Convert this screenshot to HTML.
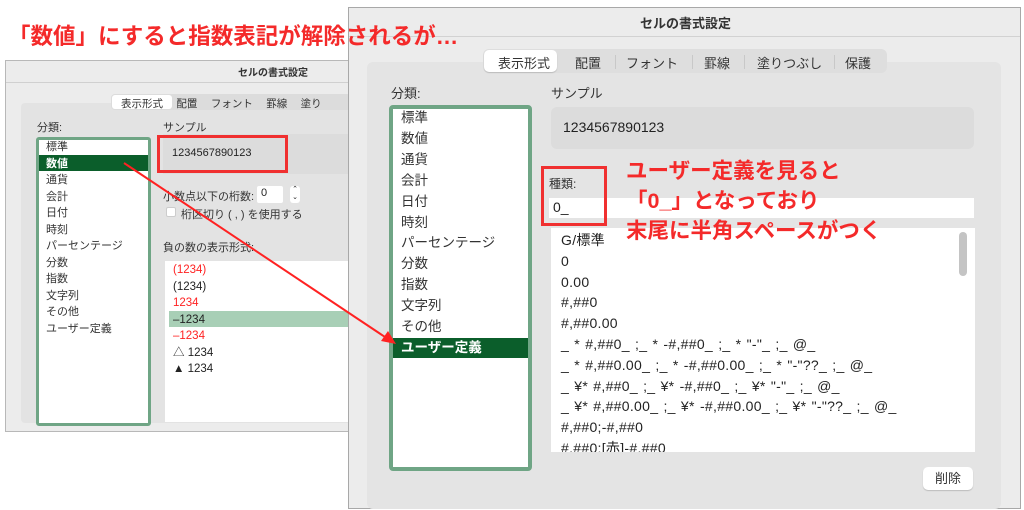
<!DOCTYPE html>
<html><head><meta charset="utf-8"><style>
*{margin:0;padding:0;box-sizing:border-box}
body{width:1024px;height:510px;background:#fff;position:relative;overflow:hidden;font-family:"Liberation Sans","Noto Sans CJK JP",sans-serif;color:#222}
.a{position:absolute;white-space:nowrap}
.red{color:#f42a2a;font-weight:bold}
</style></head><body>

<!-- left dialog -->
<div class="a" style="left:5px;top:60px;width:350px;height:372px;background:#ececec;border:1px solid #b8b8b8"></div>
<div class="a" style="left:6px;top:82px;width:344px;height:1px;background:#d0d0d0"></div>
<div class="a" style="left:238px;top:64px;font-size:10px;font-weight:bold;color:#333">セルの書式設定</div>
<div class="a" style="left:21px;top:103px;width:330px;height:320px;background:#e3e3e3;border-radius:4px"></div>
<div class="a" style="left:111px;top:94px;width:240px;height:16px;background:#dcdcdc;border-radius:4px"></div>
<div class="a" style="left:112px;top:95px;width:60px;height:14px;background:#fff;border-radius:3px"></div>
<div class="a" style="left:121px;top:96px;font-size:10.5px;color:#333">表示形式　 配置　 フォント　 罫線　 塗り</div>
<div class="a" style="left:37px;top:119px;font-size:11px;color:#333">分類:</div>
<div class="a" style="left:163px;top:119px;font-size:11px;color:#333">サンプル</div>
<div class="a" style="left:36px;top:137px;width:115px;height:289px;background:#fff;border:3px solid #6fa585;border-radius:3px"></div>
<div class="a" style="left:39px;top:155px;width:109px;height:16px;background:#0b5e2b"></div>
<div class="a" style="left:46px;top:139px;font-size:11px;line-height:16.5px;color:#333">標準<br><span style="color:#fff;font-weight:bold">数値</span><br>通貨<br>会計<br>日付<br>時刻<br>パーセンテージ<br>分数<br>指数<br>文字列<br>その他<br>ユーザー定義</div>
<div class="a" style="left:163px;top:134px;width:186px;height:40px;background:#dcdcdc"></div>
<div class="a" style="left:157px;top:135px;width:131px;height:38px;border:3px solid #f03030"></div>
<div class="a" style="left:172px;top:147px;font-size:11px;color:#222">1234567890123</div>
<div class="a" style="left:163px;top:188px;font-size:11px;color:#333">小数点以下の桁数:</div>
<div class="a" style="left:257px;top:186px;width:26px;height:17px;background:#fff;border-radius:2px;font-size:11px;padding:1px 4px">0</div>
<div class="a" style="left:290px;top:186px;width:10px;height:17px;background:#fff;border-radius:3px;font-size:7px;line-height:8px;text-align:center">⌃<br>⌄</div>
<div class="a" style="left:166px;top:207px;width:10px;height:10px;background:#fff;border-radius:2px;border:1px solid #ccc"></div>
<div class="a" style="left:181px;top:206px;font-size:11px;color:#333">桁区切り ( , ) を使用する</div>
<div class="a" style="left:163px;top:239px;font-size:11px;color:#333">負の数の表示形式:</div>
<div class="a" style="left:165px;top:261px;width:185px;height:161px;background:#fff"></div>
<div class="a" style="left:169px;top:311px;width:181px;height:16px;background:#a8cfb6"></div>
<div class="a" style="left:173px;top:262px;font-size:11.5px;line-height:16.5px"><span style="color:#f22">(1234)</span><br>(1234)<br><span style="color:#f22">1234</span><br>–1234<br><span style="color:#f22">–1234</span><br>△ 1234<br>▲ 1234</div>

<!-- right dialog -->
<div class="a" style="left:348px;top:7px;width:673px;height:502px;background:#ececec;border:1px solid #a8a8a8"></div>
<div class="a" style="left:349px;top:36px;width:671px;height:1px;background:#d2d2d2"></div>
<div class="a" style="left:640px;top:13px;font-size:13px;font-weight:bold;color:#333">セルの書式設定</div>
<div class="a" style="left:367px;top:62px;width:634px;height:447px;background:#e4e4e4;border-radius:6px"></div>
<div class="a" style="left:483px;top:49px;width:404px;height:24px;background:#dedede;border-radius:6px"></div>
<div class="a" style="left:484px;top:50px;width:73px;height:22px;background:#fff;border-radius:5px;box-shadow:0 1px 1px #bbb"></div>
<div class="a" style="left:498px;top:53px;font-size:13px;color:#333">表示形式</div>
<div class="a" style="left:575px;top:53px;font-size:13px;color:#333">配置</div>
<div class="a" style="left:626px;top:53px;font-size:13px;color:#333">フォント</div>
<div class="a" style="left:704px;top:53px;font-size:13px;color:#333">罫線</div>
<div class="a" style="left:757px;top:53px;font-size:13px;color:#333">塗りつぶし</div>
<div class="a" style="left:845px;top:53px;font-size:13px;color:#333">保護</div>
<div class="a" style="left:615px;top:55px;width:1px;height:14px;background:#c8c8c8"></div>
<div class="a" style="left:692px;top:55px;width:1px;height:14px;background:#c8c8c8"></div>
<div class="a" style="left:744px;top:55px;width:1px;height:14px;background:#c8c8c8"></div>
<div class="a" style="left:834px;top:55px;width:1px;height:14px;background:#c8c8c8"></div>
<div class="a" style="left:391px;top:83px;font-size:13px;color:#333">分類:</div>
<div class="a" style="left:551px;top:83px;font-size:13px;color:#333">サンプル</div>
<div class="a" style="left:389px;top:105px;width:143px;height:366px;background:#fff;border:4px solid #6fa585;border-radius:4px"></div>
<div class="a" style="left:393px;top:338px;width:135px;height:20px;background:#0b5e2b"></div>
<div class="a" style="left:401px;top:108px;font-size:13.5px;line-height:20.9px;color:#333">標準<br>数値<br>通貨<br>会計<br>日付<br>時刻<br>パーセンテージ<br>分数<br>指数<br>文字列<br>その他<br><span style="color:#fff;font-weight:bold">ユーザー定義</span></div>
<div class="a" style="left:551px;top:107px;width:423px;height:42px;background:#dcdcdc;border-radius:6px"></div>
<div class="a" style="left:563px;top:119px;font-size:14px;color:#222">1234567890123</div>
<div class="a" style="left:549px;top:175px;font-size:12px;color:#333">種類:</div>
<div class="a" style="left:549px;top:198px;width:425px;height:20px;background:#fff"></div>
<div class="a" style="left:553px;top:199px;font-size:14px;color:#222">0_</div>
<div class="a" style="left:541px;top:166px;width:66px;height:60px;border:3px solid #f03030"></div>
<div class="a" style="left:551px;top:228px;width:424px;height:224px;background:#fff"></div>
<div class="a" style="left:959px;top:232px;width:8px;height:44px;background:#c4c4c4;border-radius:4px"></div>
<div class="a" style="left:561px;top:230px;font-size:14px;line-height:20.8px;color:#222;letter-spacing:0.3px;word-spacing:1px">G/標準<br>0<br>0.00<br>#,##0<br>#,##0.00<br>_ * #,##0_ ;_ * -#,##0_ ;_ * "-"_ ;_ @_<br>_ * #,##0.00_ ;_ * -#,##0.00_ ;_ * "-"??_ ;_ @_<br>_ ¥* #,##0_ ;_ ¥* -#,##0_ ;_ ¥* "-"_ ;_ @_<br>_ ¥* #,##0.00_ ;_ ¥* -#,##0.00_ ;_ ¥* "-"??_ ;_ @_<br>#,##0;-#,##0<br>#,##0;[赤]-#,##0</div>
<div class="a" style="left:551px;top:452px;width:424px;height:12px;background:#e4e4e4"></div>
<div class="a" style="left:923px;top:467px;width:50px;height:23px;background:#fff;border-radius:5px;box-shadow:0 1px 1px #bbb;font-size:13px;text-align:center;line-height:23px;color:#333">削除</div>

<!-- annotations -->
<div class="a red" style="left:8px;top:19px;font-size:22.5px">「数値」にすると指数表記が解除されるが…</div>
<div class="a red" style="left:626px;top:156px;font-size:21.5px;line-height:30px">ユーザー定義を見ると<br>「0_」となっており<br>末尾に半角スペースがつく</div>

<!-- arrow -->
<svg class="a" style="left:0;top:0" width="1024" height="510">
<line x1="124" y1="163" x2="388" y2="339" stroke="#f22" stroke-width="2"/>
<polygon points="396,344 381,341 388,331" fill="#f22"/>
</svg>
</body></html>
